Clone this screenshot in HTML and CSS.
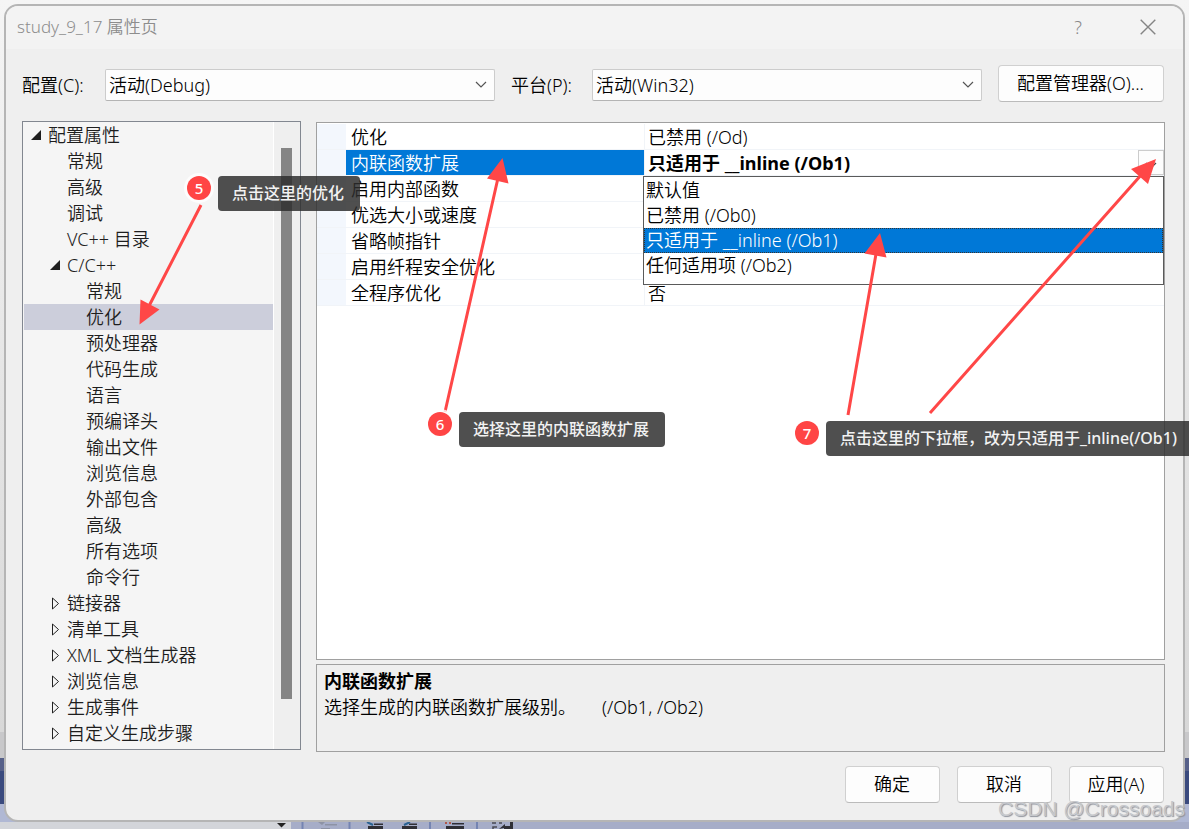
FILE: index.html
```html
<!DOCTYPE html>
<html lang="zh-CN">
<head>
<meta charset="utf-8">
<title>study_9_17 属性页</title>
<link rel="stylesheet" href="styles.css">
</head>
<body>
<main class="dialog">
  <header class="titlebar">
    <h1 class="title">study_9_17 属性页</h1>
    <button class="title-btn" type="button" aria-label="帮助">?</button>
    <button class="title-btn" type="button" aria-label="关闭">
      <svg width="16" height="16" viewBox="0 0 16 16"><path d="M.7.7l14.6 14.6M15.3.7L.7 15.3" fill="none" stroke="#858585" stroke-width="1.4"/></svg>
    </button>
  </header>

  <div class="config">
    <label class="config-label" for="cfg">配置(C):</label>
    <select class="combo" id="cfg"><option>活动(Debug)</option></select>
    <label class="config-label second" for="plat">平台(P):</label>
    <select class="combo" id="plat"><option>活动(Win32)</option></select>
    <button class="btn manager" type="button">配置管理器(O)...</button>
  </div>

  <div class="panes">
    <nav class="tree">
      <ul class="tree-list">
        <li class="node open">配置属性</li>
        <li class="node l1">常规</li>
        <li class="node l1">高级</li>
        <li class="node l1">调试</li>
        <li class="node l1">VC++ 目录</li>
        <li class="node l1 open">C/C++</li>
        <li class="node l2">常规</li>
        <li class="node l2 selected">优化</li>
        <li class="node l2">预处理器</li>
        <li class="node l2">代码生成</li>
        <li class="node l2">语言</li>
        <li class="node l2">预编译头</li>
        <li class="node l2">输出文件</li>
        <li class="node l2">浏览信息</li>
        <li class="node l2">外部包含</li>
        <li class="node l2">高级</li>
        <li class="node l2">所有选项</li>
        <li class="node l2">命令行</li>
        <li class="node l1 closed">链接器</li>
        <li class="node l1 closed">清单工具</li>
        <li class="node l1 closed">XML 文档生成器</li>
        <li class="node l1 closed">浏览信息</li>
        <li class="node l1 closed">生成事件</li>
        <li class="node l1 closed">自定义生成步骤</li>
      </ul>
      <div class="scrollbar"><div class="thumb"></div></div>
    </nav>

    <section class="detail">
      <div class="sheet">
        <table class="props">
          <colgroup><col class="c-gutter"><col class="c-name"><col></colgroup>
          <tbody>
            <tr><td class="gutter"></td><th scope="row">优化</th><td>已禁用 (/Od)</td></tr>
            <tr class="active"><td class="gutter"></td><th scope="row">内联函数扩展</th>
              <td class="value-edit">
                <div class="editor">
                  <span class="editor-text">只适用于 __inline (/Ob1)</span>
                  <button class="drop-btn" type="button" aria-label="展开">
                    <svg width="12" height="8" viewBox="0 0 12 8"><path d="M1 1l5 5 5-5" fill="none" stroke="#444" stroke-width="1.2"/></svg>
                  </button>
                  <ul class="menu" role="listbox">
                    <li role="option">默认值</li>
                    <li role="option">已禁用 (/Ob0)</li>
                    <li role="option" class="current" aria-selected="true">只适用于 __inline (/Ob1)</li>
                    <li role="option">任何适用项 (/Ob2)</li>
                  </ul>
                </div>
              </td></tr>
            <tr><td class="gutter"></td><th scope="row">启用内部函数</th><td></td></tr>
            <tr><td class="gutter"></td><th scope="row">优选大小或速度</th><td></td></tr>
            <tr><td class="gutter"></td><th scope="row">省略帧指针</th><td></td></tr>
            <tr><td class="gutter"></td><th scope="row">启用纤程安全优化</th><td></td></tr>
            <tr><td class="gutter"></td><th scope="row">全程序优化</th><td>否</td></tr>
          </tbody>
        </table>
      </div>
      <div class="help">
        <h2 class="help-title">内联函数扩展</h2>
        <p class="help-text"><span>选择生成的内联函数扩展级别。</span><span>(/Ob1, /Ob2)</span></p>
      </div>
    </section>
  </div>

  <footer class="actions">
    <button class="btn" type="button">确定</button>
    <button class="btn" type="button">取消</button>
    <button class="btn" type="button">应用(A)</button>
  </footer>
</main>

<div class="toolbar">
  <svg width="540" height="7" viewBox="0 0 540 7">
    <path d="M0 0h291v7H0z" fill="#d3d5da"/>
    <path d="M277 1h9l-4.500 4.500z" fill="#222"/>
    <path d="M302.500 0v7M349.500 0v7M430 0v7M477 0v7" stroke="#7484b2" stroke-width="2"/>
    <path d="M318 0h7l-3 3zM325 2h12v1.500h-12zM321 6h9v1h-9z" fill="#8d93a5"/>
    <path d="M374 1.500h9v1.500h-9zM368 4h15v3h-15zM409 1.500h8v1.500h-8zM402 4h15v3h-15zM452 1h12v1.500h-12zM446 4h18v3h-18z" fill="#2f2f36"/>
    <path d="M367 0l6 3M410 0l-6 3" stroke="#2a6292" stroke-width="2"/>
    <path d="M445 1h2M449 1h2" stroke="#b0584a" stroke-width="2"/>
    <path d="M492 1h4M499 1h3M497 5h-4v2" fill="none" stroke="#4a4a52" stroke-width="1.500"/>
    <path d="M510 0h3v7h-9v-1l-5 1 6-5v2h5z" fill="#2f2f36"/>
  </svg>
</div>

<svg class="arrows" width="1189" height="829" viewBox="0 0 1189 829" aria-hidden="true">
  <g stroke="#ff4747" stroke-width="3">
    <path d="M201 205L149 306M445 412L498 178M848 415L876 254M930 413L1142 174"/>
  </g>
  <path fill="#ff4747" d="M139.500 324.500l1-25 19 10zM502.500 158l-15.500 20.500 21.500 5zM880 233l-15.500 20.500 22 4zM1156 159l-25 10 17 15z"/>
</svg>
<div class="note n5"><span class="badge">5</span><span class="tip">点击这里的优化</span></div>
<div class="note n6"><span class="badge">6</span><span class="tip">选择这里的内联函数扩展</span></div>
<div class="note n7"><span class="badge">7</span><span class="tip">点击这里的下拉框，改为只适用于_inline(/Ob1)</span></div>
<div class="watermark">CSDN @Crossoads</div>
</body>
</html>
```
FILE: styles.css
```css
* { box-sizing: border-box; }

body {
  position: relative;
  display: flex;
  flex-direction: column;
  min-height: 100vh;
  margin: 0;
  padding: 4px 4px 0;
  overflow: hidden;
  color: #000;
  font: 350 18px/26px "Noto Sans", "Noto Sans CJK SC", sans-serif;
  background: linear-gradient(to top, #b0b8d4 25px, #3a4a7e 25px 58px, #566089 58px 71px, #c8c8ca 71px 97px, #d8d8d8 97px, #e4e4e4 50%, #f5f5f5);
}

h1, h2, p, ul { margin: 0; padding: 0; font-weight: inherit; }
ul { list-style: none; }
button, select { font: inherit; color: inherit; }

.dialog {
  display: flex;
  flex: 1;
  flex-direction: column;
  background: #efefef;
  border: 2px solid #b5b5b5;
  border-radius: 14px;
  overflow: hidden;
}

.titlebar {
  display: flex;
  align-items: center;
  height: 43px;
  padding: 0 10px 2px 11px;
  background: #f3f3f3;
}
.title { flex: 1; font-size: 17px; color: #8d8d8d; }
.title-btn {
  display: flex;
  align-items: center;
  justify-content: center;
  width: 50px;
  height: 40px;
  padding: 0;
  border: 0;
  background: none;
  color: #888;
}
.title-btn + .title-btn { margin-left: 20px; }

.config {
  display: flex;
  align-items: center;
  padding: 16px 19px 0 16px;
}
.config-label { width: 83px; margin-top: 2px; }
.config-label.second { width: 97px; padding-left: 16px; }
.combo {
  flex: 1;
  min-width: 0;
  height: 32px;
  margin: 2px 0 0;
  padding: 0 30px 0 3px;
  appearance: none;
  border: 1px solid #ccc;
  border-bottom-color: #b4b4b4;
  border-radius: 2px;
  background: #fdfdfd url("data:image/svg+xml,%3Csvg xmlns='http://www.w3.org/2000/svg' width='12' height='8'%3E%3Cpath d='M1 1l5 5 5-5' fill='none' stroke='%23555' stroke-width='1.2'/%3E%3C/svg%3E") no-repeat right 7px center;
}
.btn {
  width: 95px;
  height: 37px;
  padding: 0 1px 2px 0;
  border: 1px solid #d0d0d0;
  border-bottom-color: #bbb;
  border-radius: 4px;
  background: #fdfdfd;
}
.manager { width: 166px; margin-left: 16px; }

.panes {
  display: flex;
  flex: 1;
  gap: 15px;
  padding: 19px 18px 0 16px;
}
.tree {
  display: flex;
  width: 279px;
  margin-bottom: 2px;
  border: 1px solid #828790;
  background: #f5f5f5;
  color: #1e1e1e;
}
.tree-list { flex: 1; padding-left: 1px; }
.node {
  display: flex;
  align-items: center;
  height: 26px;
  padding-left: 6px;
}
.node::before { content: ""; width: 18px; flex: none; }
.l1 { padding-left: 25px; }
.l2 { padding-left: 44px; }
.open::before {
  height: 10px;
  background: #1e1e1e;
  clip-path: polygon(1px 100%, 11px 0, 11px 100%);
}
.closed::before {
  height: 13px;
  background: url("data:image/svg+xml,%3Csvg xmlns='http://www.w3.org/2000/svg' width='12' height='13'%3E%3Cpath d='M3.5 1v11l6-5.500z' fill='none' stroke='%23222'/%3E%3C/svg%3E") no-repeat;
}
.selected { background: #cccedb; }
.scrollbar {
  width: 27px;
  padding: 26px 8px 50px 7px;
  border-left: 1px solid #fff;
  background: #efefef;
}
.thumb { height: 100%; background: #858585; }

.detail {
  display: flex;
  flex: 1;
  flex-direction: column;
  gap: 4px;
  padding-top: 1px;
  min-width: 0;
}
.sheet {
  flex: 1;
  padding-top: 1px;
  border: 1px solid #a0a0a0;
  background: #fff;
}
.props { width: 100%; table-layout: fixed; border-collapse: separate; border-spacing: 0; }
.c-gutter { width: 29px; }
.c-name { width: 298px; }
.props td, .props th {
  height: 26px;
  padding: 2px 0 0 5px;
  border-bottom: 1px solid #f1f4f8;
  font-weight: inherit;
  line-height: 23px;
  text-align: left;
  white-space: nowrap;
}
.props td:last-child { padding-left: 3px; border-left: 1px solid #f1f4f8; }
.props .gutter { padding: 0; background: #f3f7fd; }
.props .active th { background: #0078d7; color: #fff; }
.props .value-edit { padding-top: 0; }
.editor { position: relative; display: flex; height: 25px; }
.editor-text { flex: 1; font-weight: 700; line-height: 27px; }
.drop-btn {
  width: 26px;
  padding: 0;
  border: 1px solid #ccc;
  background: #fdfdfd;
  line-height: 16px;
}
.menu {
  position: absolute;
  z-index: 1;
  top: 26px;
  right: 0;
  left: -5px;
  padding: 1px 0 6px;
  border: 1px solid #5a5a5a;
  background: #fff;
}
.menu li { padding-left: 2px; line-height: 25px; }
.menu .current { background: #0078d7; color: #fff; outline: 1px dotted #333; outline-offset: -1px; }

.help {
  height: 88px;
  padding: 3px 7px;
  border: 1px solid #a0a0a0;
}
.help-title { font-size: 18px; font-weight: 700; }
.help-text { display: flex; gap: 26px; }

.actions {
  display: flex;
  justify-content: flex-end;
  gap: 17px;
  padding: 14px 19px 17px;
}

.toolbar {
  height: 7px;
  margin: 0 -4px;
  background: #a6adc8;
  line-height: 0;
}

.arrows { position: absolute; z-index: 2; top: 0; left: 0; }
.note { position: absolute; z-index: 3; display: flex; gap: 7px; font-weight: 500; }
.n5 { left: 187px; top: 176px; }
.n6 { left: 428px; top: 412px; }
.n7 { left: 795px; top: 421px; }
.badge {
  width: 24px;
  height: 24px;
  border-radius: 50%;
  background: #ff4545;
  box-shadow: 0 0 0 3px rgba(255, 255, 255, .8);
  color: #fff;
  font-size: 15px;
  line-height: 24px;
  text-align: center;
}
.tip {
  height: 35px;
  padding: 0 16px 0 14px;
  border-radius: 4px;
  background: rgba(45, 45, 45, .84);
  color: #f2f2f2;
  font-size: 16px;
  line-height: 34px;
  white-space: nowrap;
}
.watermark {
  position: absolute;
  z-index: 4;
  right: 4px;
  bottom: 7px;
  color: #c6c8cc;
  font: 21px/26px "Liberation Sans", sans-serif;
  text-shadow: 1px 1px 1px #8f939c;
}
```
